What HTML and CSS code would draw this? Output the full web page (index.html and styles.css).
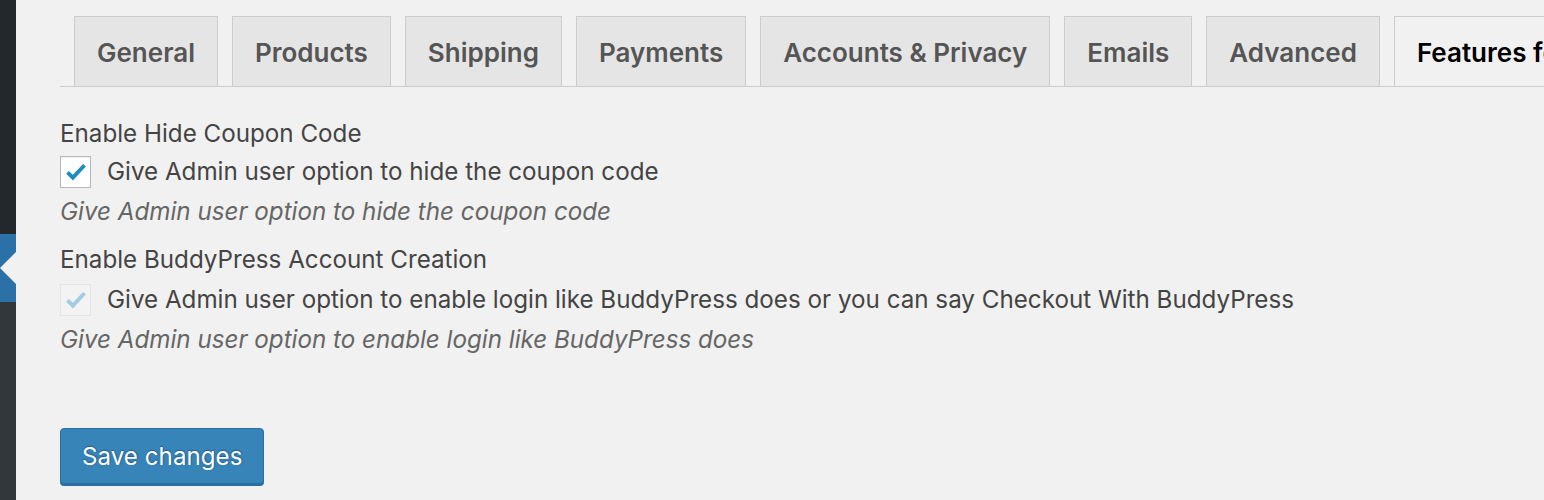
FILE: index.html
```html
<!DOCTYPE html>
<html>
<head>
<meta charset="utf-8">
<link rel="stylesheet" href="styles.css">
</head>
<body>
<div class="sidebar">
  <div class="sb-top"></div>
  <div class="sb-current"><span class="sb-arrow"></span></div>
  <div class="sb-bottom"></div>
</div>
<main class="main">
  <nav class="tabs">
    <a class="tab">General</a>
    <a class="tab">Products</a>
    <a class="tab">Shipping</a>
    <a class="tab">Payments</a>
    <a class="tab">Accounts &amp; Privacy</a>
    <a class="tab">Emails</a>
    <a class="tab">Advanced</a>
    <a class="tab active">Features for BuddyPress</a>
  </nav>
  <section class="settings">
    <div class="field">
      <div class="field-label">Enable Hide Coupon Code</div>
      <label class="check-row">
        <span class="checkbox">
          <svg viewBox="0 0 20 20" width="26" height="26"><path d="M3.5 10.2 L7.6 14.3 L16.5 4.8" fill="none" stroke="#1e8cbe" stroke-width="3"/></svg>
        </span>
        <span class="check-text">Give Admin user option to hide the coupon code</span>
      </label>
      <p class="desc">Give Admin user option to hide the coupon code</p>
    </div>
    <div class="field">
      <div class="field-label">Enable BuddyPress Account Creation</div>
      <label class="check-row second">
        <span class="checkbox disabled">
          <svg viewBox="0 0 20 20" width="26" height="26"><path d="M3.5 10.2 L7.6 14.3 L16.5 4.8" fill="none" stroke="#a3cbe3" stroke-width="3"/></svg>
        </span>
        <span class="check-text">Give Admin user option to enable login like BuddyPress does or you can say Checkout With BuddyPress</span>
      </label>
      <p class="desc">Give Admin user option to enable login like BuddyPress does</p>
    </div>
    <div class="actions">
      <button class="btn-primary">Save changes</button>
    </div>
  </section>
</main>
</body>
</html>
```
FILE: styles.css
```css
html, body {
  margin: 0;
  height: 100%;
}
body {
  display: flex;
  background: #f1f1f1;
  font-family: Inter, "Noto Sans", sans-serif;
  overflow: hidden;
}
.sidebar {
  width: 16px;
  flex: 0 0 16px;
  display: flex;
  flex-direction: column;
}
.sb-top {
  height: 234px;
  background: #23282d;
}
.sb-current {
  height: 68px;
  background: #2c70a8;
  display: flex;
  align-items: center;
}
.sb-arrow {
  width: 0;
  height: 0;
  border-top: 16px solid transparent;
  border-bottom: 16px solid transparent;
  border-right: 16px solid #f1f1f1;
}
.sb-bottom {
  flex: 1;
  background: #32373c;
}
.main {
  flex: 1;
  min-width: 0;
  padding: 16px 0 0 44px;
}
.tabs {
  display: flex;
  gap: 14px;
  padding-left: 14px;
  border-bottom: 1px solid #ccc;
  height: 70px;
  white-space: nowrap;
  overflow: hidden;
}
.tab {
  flex: 0 0 auto;
  display: block;
  box-sizing: border-box;
  height: 71px;
  padding: 0 22px;
  border: 1px solid #ccc;
  border-bottom: none;
  background: #e5e5e5;
  color: #555;
  font-size: 26px;
  font-weight: 600;
  line-height: 71px;
}
.tab.active {
  background: #f1f1f1;
  color: #000;
  position: relative;
  z-index: 1;
}
.settings {
  padding-top: 31px;
  color: #3c434a;
  font-size: 24.2px;
}
.field {
  margin-bottom: 16px;
}
.field-label {
  line-height: 32px;
  color: #444;
}
.check-row {
  display: flex;
  align-items: center;
  gap: 16px;
  margin-top: 6px;
  color: #444;
}
.check-row.second {
  margin-top: 8px;
}
.checkbox {
  box-sizing: border-box;
  width: 31px;
  height: 32px;
  border: 1px solid #b4b9be;
  background: #fff;
  box-shadow: inset 0 1px 2px rgba(0,0,0,0.07);
  display: flex;
  align-items: center;
  justify-content: center;
}
.checkbox.disabled {
  background: #f3f3f3;
  border-color: #e2e4e6;
  box-shadow: none;
}
.check-text {
  line-height: 32px;
}
.desc {
  margin: 8px 0 0;
  font-style: italic;
  color: #666;
  line-height: 32px;
}
.actions {
  padding-top: 56px;
}
.btn-primary {
  font-family: Inter, "Noto Sans", sans-serif;
  font-size: 24.2px;
  color: #fff;
  background: #3784b8;
  border: 1px solid #2a6ea2;
  border-radius: 4px;
  box-shadow: 0 2px 0 #2a6ea2;
  height: 56px;
  padding: 0 21px;
  text-shadow: 0 -1px 1px #23608f, 1px 0 1px #23608f;
}
```
